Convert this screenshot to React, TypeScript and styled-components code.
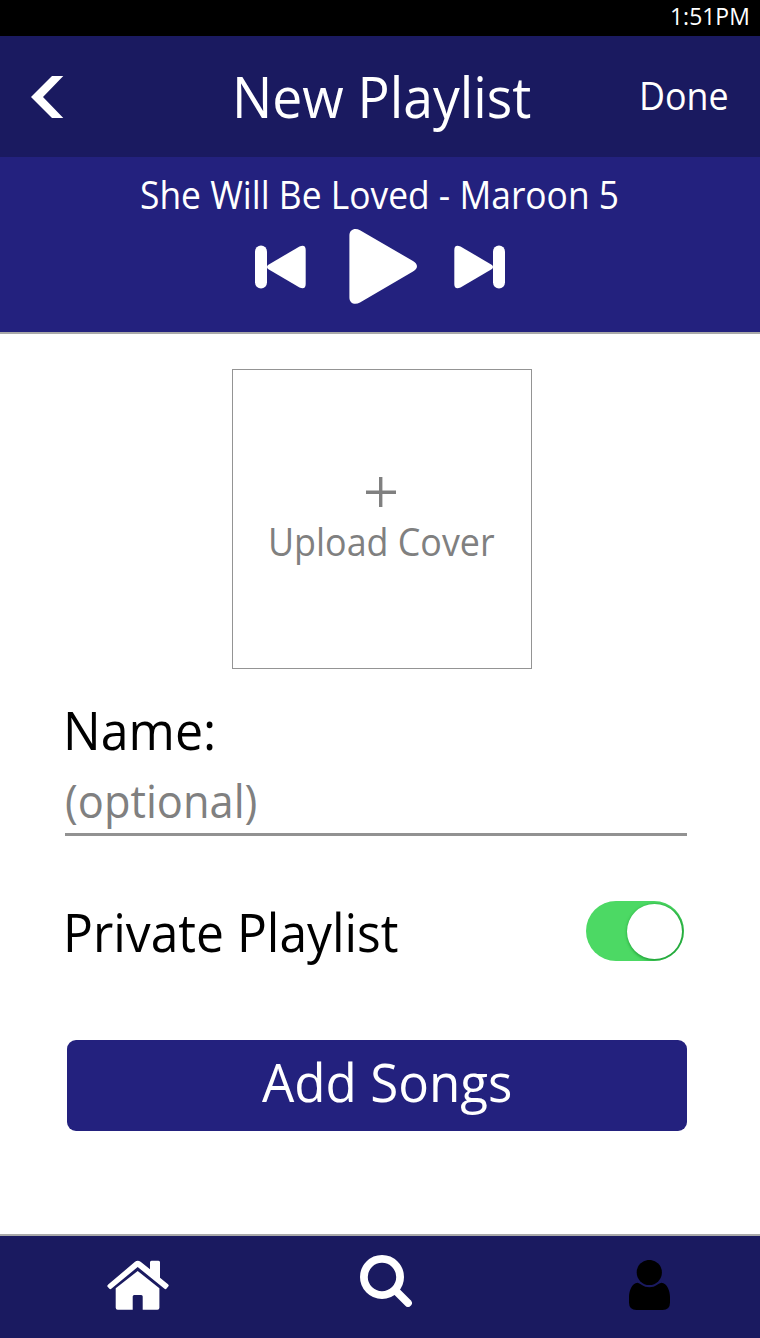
import React from "react";
import styled, { createGlobalStyle } from "styled-components";

const GlobalStyle = createGlobalStyle`
  * { box-sizing: border-box; }
  body { margin: 0; background: #fff; font-family: "Open Sans", "Noto Sans", sans-serif; }
  svg { display: block; }
  button { border: 0; padding: 0; margin: 0; background: none; font-family: inherit; }
`;

const Screen = styled.div`
  width: 760px;
  height: 1338px;
  display: flex;
  flex-direction: column;
  overflow: hidden;
`;

/* Slightly condensed label, anchored to its left edge */
const Label = styled.span<{ $narrow: number }>`
  display: block;
  white-space: nowrap;
  transform: scaleX(${(p) => p.$narrow});
  transform-origin: left center;
`;

const StatusBar = styled.div`
  height: 36px;
  padding-left: 670px;
  background: #000;
  color: #fff;
  font-size: 24.5px;
  line-height: 31px;
`;

const Header = styled.header`
  display: grid;
  grid-template-columns: 231.5px 407.5px 1fr;
  height: 121px;
  background: #1a1a60;
  color: #fff;
`;

const BackButton = styled.button`
  display: flex;
  padding: 40px 0 0 31px;
`;

const Title = styled.h1`
  margin: 0;
  font-size: 57px;
  font-weight: 400;
  line-height: 121px;
`;

const DoneButton = styled.button`
  color: #fff;
  font-size: 37.5px;
  line-height: 119px;
  height: 119px;
  text-align: left;
`;

const Player = styled.section`
  height: 177px;
  background: #23217e;
  border-bottom: 2px solid #a9a9a9;
  color: #fff;
`;

const TrackName = styled.div`
  height: 71px;
  padding-left: 140px;
  font-size: 38px;
  line-height: 74px;
`;

const Controls = styled.div`
  display: flex;
  align-items: center;
  height: 77px;
  padding-left: 255px;
`;

const ControlButton = styled.button<{ $before?: number }>`
  margin-left: ${(p) => p.$before ?? 0}px;
`;

const Main = styled.main`
  flex: 1;
  display: flex;
  flex-direction: column;
  align-items: flex-start;
  padding: 35px 73px 0 65px;
`;

const CoverUpload = styled.button`
  display: flex;
  flex-direction: column;
  width: 300px;
  height: 300px;
  margin-left: 167px;
  padding: 107px 0 0 35px;
  border: 1px solid #949494;
  color: #808080;
  font-size: 38px;
  line-height: 60px;
  text-align: left;

  svg { margin: 0 0 4px 98px; }
`;

const FieldLabel = styled.div`
  margin: 31px 0 0 -2px;
  font-size: 53.5px;
  line-height: 60px;
`;

const NameField = styled.div`
  width: 622px;
  height: 66px;
  margin-top: 10px;
  border-bottom: 3px solid #929292;
  color: #808080;
  font-size: 46px;
  line-height: 60px;
`;

const PrivateRow = styled.div`
  display: flex;
  justify-content: space-between;
  width: 621px;
  height: 60px;
  margin: 65px 0 0 -2px;
  font-size: 53.5px;
  line-height: 62px;
`;

const Switch = styled.button`
  display: flex;
  justify-content: flex-end;
  align-items: center;
  width: 98px;
  height: 60px;
  padding-right: 2px;
  border-radius: 30px;
  background: #4cd964;
  overflow: hidden;
`;

const Knob = styled.span`
  width: 55px;
  height: 55px;
  border-radius: 50%;
  background: #fff;
  box-shadow: 1px 1px 3px 1px rgba(0, 125, 25, 0.6);
`;

const AddButton = styled.button`
  width: 620px;
  height: 91px;
  margin: 79px 0 0 2px;
  padding: 0 0 7px 194.5px;
  border-radius: 9px;
  background: #23217e;
  color: #fff;
  font-size: 53.5px;
  line-height: 84px;
  text-align: left;
`;

const TabBar = styled.nav`
  display: flex;
  align-items: flex-start;
  height: 104px;
  border-top: 2px solid #a9a9a9;
  background: #1a1a60;
`;

const Tab = styled.a<{ $top: number; $before: number }>`
  margin: ${(p) => p.$top}px 0 0 ${(p) => p.$before}px;
`;

const SkipIcon = ({ flipped = false }: { flipped?: boolean }) => (
  <svg width="51" height="44" viewBox="0 0 51 44" fill="#fff">
    <g transform={flipped ? "matrix(-1 0 0 1 51 0)" : undefined}>
      <rect x="0" y="0.5" width="12" height="43" rx="6" />
      <path d="M13 20 L44.5 1.4 Q50.7-1 50.7 5 V39 Q50.7 45 44.5 42.6 L13 24 Q11 22 13 20Z" />
    </g>
  </svg>
);

const PlayIcon = () => (
  <svg width="68" height="77" viewBox="0 0 68 77" fill="#fff">
    <path d="M0.4 7.5 C0.4 1.5 6 -0.5 11 2.3 L64 33 C69.3 36 69.3 40.6 64 43.6 L11 74.5 C6 77.3 0.4 75.5 0.4 69.5Z" />
  </svg>
);

export default function App() {
  return (
    <Screen>
      <GlobalStyle />
      <StatusBar>
        <Label $narrow={0.936}>1:51PM</Label>
      </StatusBar>
      <Header>
        <BackButton aria-label="Back">
          <svg width="33" height="42" viewBox="0 0 33 42" fill="#fff">
            <path d="M0 21 L21 0 H32.3 L12 21 L32.3 42 H21Z" />
          </svg>
        </BackButton>
        <Title>
          <Label $narrow={0.938}>New Playlist</Label>
        </Title>
        <DoneButton>
          <Label $narrow={0.955}>Done</Label>
        </DoneButton>
      </Header>
      <Player>
        <TrackName>
          <Label $narrow={0.931}>She Will Be Loved - Maroon 5</Label>
        </TrackName>
        <Controls>
          <ControlButton aria-label="Previous">
            <SkipIcon />
          </ControlButton>
          <ControlButton aria-label="Play" $before={43}>
            <PlayIcon />
          </ControlButton>
          <ControlButton aria-label="Next" $before={37}>
            <SkipIcon flipped />
          </ControlButton>
        </Controls>
      </Player>
      <Main>
        <CoverUpload>
          <svg width="30" height="30" viewBox="0 0 30 30" stroke="#808080" strokeWidth="3.4">
            <path d="M0 15.2 H30 M14.7 0 V30" />
          </svg>
          <Label $narrow={0.943}>Upload Cover</Label>
        </CoverUpload>
        <FieldLabel>
          <Label $narrow={0.936}>Name:</Label>
        </FieldLabel>
        <NameField>
          <Label $narrow={0.943}>(optional)</Label>
        </NameField>
        <PrivateRow>
          <Label $narrow={0.93}>Private Playlist</Label>
          <Switch role="switch" aria-checked="true" aria-label="Private">
            <Knob />
          </Switch>
        </PrivateRow>
        <AddButton>
          <Label $narrow={0.9555}>Add Songs</Label>
        </AddButton>
      </Main>
      <TabBar>
        <Tab aria-label="Home" $top={24} $before={107}>
          <svg width="62" height="50" viewBox="0 0 62 50" fill="#fff">
            <path d="M1.2 24.6 L28 1.8 Q30.7 -0.2 33.6 1.8 L43 9.3 V2.2 Q43 0.7 44.5 0.7 H51.5 Q53 0.7 53 2.2 V17.7 L61 24.2 Q62.4 25.4 61.2 26.6 L59.6 28.6 Q58.6 29.8 57.2 28.6 L30.7 7 L4.6 28.6 Q3.2 29.8 2.2 28.6 L0.6 26.8 Q-0.2 25.8 1.2 24.6Z" />
            <path d="M30.7 11 L52.4 28.3 V47.7 Q52.4 49.7 50.4 49.7 H35.7 V36.5 Q35.7 35 34.2 35 H27.2 Q25.7 35 25.7 36.5 V49.7 H10.7 Q8.7 49.7 8.7 47.7 V28.3Z" />
          </svg>
        </Tab>
        <Tab aria-label="Search" $top={19} $before={191}>
          <svg width="52" height="52" viewBox="0 0 52 52" fill="none" stroke="#fff">
            <circle cx="22" cy="22" r="18.1" strokeWidth="7.8" />
            <path d="M36 36 L48 48" strokeWidth="7.6" strokeLinecap="round" />
          </svg>
        </Tab>
        <Tab aria-label="Profile" $top={24} $before={217}>
          <svg width="41" height="50" viewBox="0 0 41 50" fill="#000">
            <circle cx="20.3" cy="12.5" r="12.6" />
            <path d="M8.5 22.8 C12 23.5 14 27.3 20.4 27.3 C27 27.3 28.5 23.5 32.5 22.8 C38 23.2 41 31 41 37 V42.5 Q41 50 33.5 50 H7.5 Q0 50 0 42.5 V37 C0 31 3 23.2 8.5 22.8Z" />
          </svg>
        </Tab>
      </TabBar>
    </Screen>
  );
}
